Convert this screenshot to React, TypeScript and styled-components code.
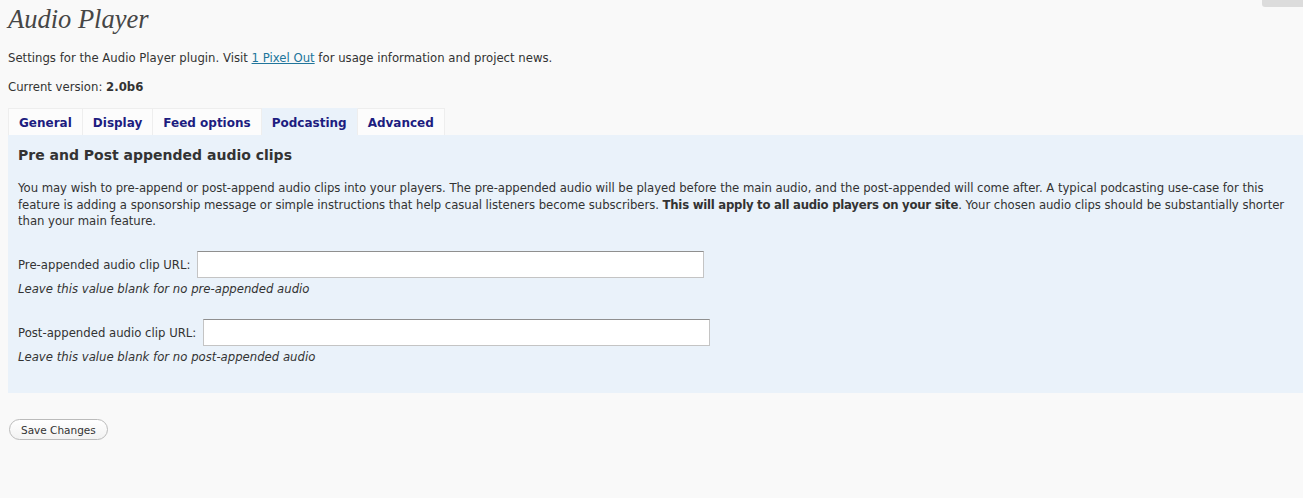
import React from "react";
import styled, { createGlobalStyle } from "styled-components";

const Global = createGlobalStyle`
  html, body { margin: 0; padding: 0; background: #f9f9f9; }
  body { font-family: "DejaVu Sans", "Liberation Sans", sans-serif; color: #333; }
`;

const Page = styled.div`
  position: relative;
  padding: 0 0 0 8px;
  min-height: 498px;
  box-sizing: border-box;
`;

const HelpTab = styled.div`
  position: absolute;
  top: 0;
  right: 0;
  width: 41px;
  height: 7px;
  background: #dcdcdc;
  border-radius: 0 0 0 3px;
`;

const Title = styled.h2`
  margin: 0;
  padding: 4px 0 0 0;
  font-family: "Liberation Serif", serif;
  font-style: italic;
  font-weight: normal;
  font-size: 26.5px;
  line-height: 30px;
  color: #464646;
`;

const Intro = styled.p`
  margin: 17px 0 0 0;
  font-size: 11.7px;
  line-height: 15px;
  color: #333;
`;

const Link = styled.a`
  color: #21759b;
  text-decoration: underline;
`;

const Version = styled.p`
  margin: 14px 0 0 0;
  font-size: 11.7px;
  line-height: 15px;
  color: #333;
`;

const Tabs = styled.div`
  display: flex;
  margin-top: 13px;
  height: 27px;
`;

const Tab = styled.div<{ $active?: boolean; $first?: boolean }>`
  display: flex;
  align-items: center;
  padding: 2px 10px 0 10px;
  height: 27px;
  box-sizing: border-box;
  background: ${(p) => (p.$active ? "#eaf2fa" : "#fcfcfc")};
  border-top: 1px solid ${(p) => (p.$active ? "#eaf2fa" : "#eeeeee")};
  border-right: 1px solid #eeeeee;
  border-left: ${(p) => (p.$first ? "1px solid #eeeeee" : "none")};
  font-weight: bold;
  font-size: 12px;
  color: #1d1d80;
`;

const Panel = styled.div`
  background: #eaf2fa;
  padding: 10px 10px 16px 10px;
  height: 258px;
  box-sizing: border-box;
`;

const Heading = styled.h3`
  margin: 0;
  font-size: 14px;
  font-weight: bold;
  line-height: 20px;
  color: #333;
`;

const Para = styled.p`
  margin: 15px -10px 0 0;
  font-size: 11.7px;
  line-height: 16.5px;
  letter-spacing: -0.05px;
  color: #333;
`;

const Strong = styled.b`
  letter-spacing: -0.25px;
`;

const Field = styled.div<{ $first?: boolean }>`
  margin-top: ${(p) => (p.$first ? "21px" : "22px")};
`;

const Row = styled.div`
  display: flex;
  align-items: center;
  gap: 7px;
`;

const Label = styled.label`
  font-size: 11.7px;
  color: #333;
  padding-top: 2px;
`;

const Input = styled.input`
  width: 507px;
  height: 27px;
  box-sizing: border-box;
  border: 1px solid #c4c4c4;
  border-top-color: #8f8f8f;
  background: #fff;
  margin: 0;
`;

const Hint = styled.div`
  font-size: 11.7px;
  font-style: italic;
  color: #333;
  margin-top: 4px;
  line-height: 15px;
`;

const Button = styled.button`
  margin-top: 26px;
  margin-left: 1px;
  height: 21px;
  padding: 0 11px;
  border: 1px solid #bbbbbb;
  border-radius: 11px;
  background: linear-gradient(#ffffff, #f2f2f2);
  font-family: "DejaVu Sans", sans-serif;
  font-size: 10.5px;
  color: #333;
`;

export default function App() {
  return (
    <>
      <Global />
      <Page>
        <HelpTab />
        <Title>Audio Player</Title>
        <Intro>
          Settings for the Audio Player plugin. Visit <Link href="#">1 Pixel Out</Link> for usage information and project news.
        </Intro>
        <Version>
          Current version: <b>2.0b6</b>
        </Version>
        <Tabs>
          <Tab $first>General</Tab>
          <Tab>Display</Tab>
          <Tab>Feed options</Tab>
          <Tab $active>Podcasting</Tab>
          <Tab>Advanced</Tab>
        </Tabs>
        <Panel>
          <Heading>Pre and Post appended audio clips</Heading>
          <Para>
            You may wish to pre-append or post-append audio clips into your players. The pre-appended audio will be played before the main audio, and the post-appended will come after. A typical podcasting use-case for this feature is adding a sponsorship message or simple instructions that help casual listeners become subscribers. <Strong>This will apply to all audio players on your site</Strong>. Your chosen audio clips should be substantially shorter than your main feature.
          </Para>
          <Field $first>
            <Row>
              <Label>Pre-appended audio clip URL:</Label>
              <Input type="text" />
            </Row>
            <Hint>Leave this value blank for no pre-appended audio</Hint>
          </Field>
          <Field>
            <Row>
              <Label>Post-appended audio clip URL:</Label>
              <Input type="text" />
            </Row>
            <Hint>Leave this value blank for no post-appended audio</Hint>
          </Field>
        </Panel>
        <Button>Save Changes</Button>
      </Page>
    </>
  );
}
